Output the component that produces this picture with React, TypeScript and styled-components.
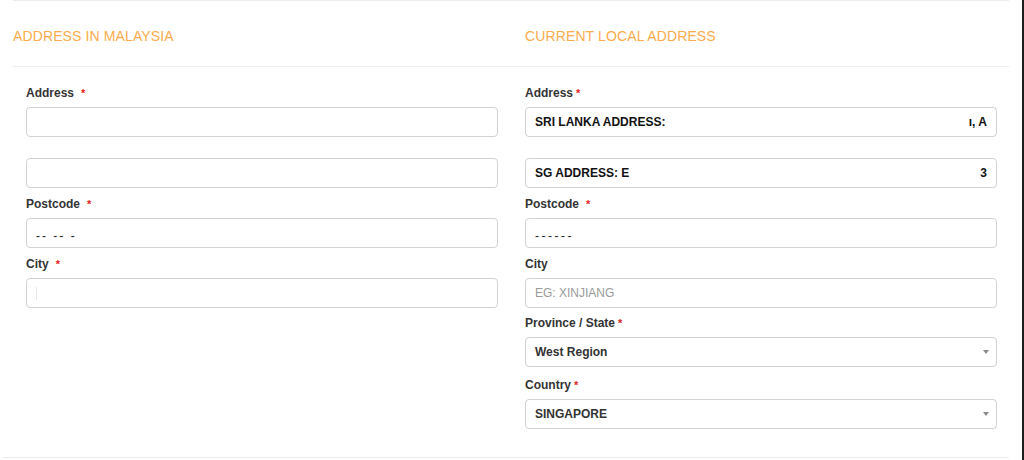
import React from "react";
import styled, { createGlobalStyle } from "styled-components";

const Global = createGlobalStyle`
  html, body { margin: 0; padding: 0; background: #fff; }
  body { font-family: "Liberation Sans", Arial, Helvetica, sans-serif; color: #333; }
`;

const Page = styled.div`
  width: 1024px;
  height: 460px;
  box-sizing: border-box;
  border-right: 2px solid #1e1e1e;
  overflow: hidden;
`;

const Section = styled.div`
  margin-left: 13px;
  width: 996px;
  border-top: 1px solid #ececec;
`;

const HeadRow = styled.div`
  display: grid;
  grid-template-columns: 499px 497px;
  height: 65px;
  border-bottom: 1px solid #ececec;
`;

const Heading = styled.h3<{ $pad: number }>`
  margin: 0;
  padding: 27px 0 0 ${(p) => p.$pad}px;
  font-size: 14px;
  font-weight: 400;
  line-height: 16px;
  color: #fbab4c;
  letter-spacing: 0.12px;
  text-transform: uppercase;
`;

const FormRow = styled.div`
  display: grid;
  grid-template-columns: 499px 497px;
  height: 390px;
`;

const Column = styled.div<{ $left: number }>`
  padding: 18px 0 0 ${(p) => p.$left}px;
  display: flex;
  flex-direction: column;
`;

const Label = styled.div<{ $mt?: number }>`
  width: 472px;
  font-size: 12px;
  font-weight: 700;
  line-height: 16px;
  color: #333;
  margin-top: ${(p) => p.$mt ?? 0}px;
  margin-bottom: 6px;
  white-space: pre;
`;

const Star = styled.span<{ $gap: number }>`
  color: #e3231b;
  margin-left: ${(p) => p.$gap}px;
  font-size: 11px;
`;

const Box = styled.div<{ $mt?: number }>`
  box-sizing: border-box;
  width: 472px;
  height: 30px;
  margin-top: ${(p) => p.$mt ?? 0}px;
  border: 1px solid #d2d2d2;
  border-radius: 4px;
  background: #fff;
  display: flex;
  align-items: center;
  justify-content: space-between;
  padding: 0 9px 0 9px;
  font-size: 12px;
`;

const Value = styled.span<{ $weight?: number; $color?: string; $drop?: number; $spacing?: number }>`
  font-weight: ${(p) => p.$weight ?? 700};
  color: ${(p) => p.$color ?? "#111"};
  padding-top: ${(p) => p.$drop ?? 0}px;
  letter-spacing: ${(p) => p.$spacing ?? 0}px;
  white-space: pre;
`;

const Caret = styled.span`
  width: 1px;
  height: 13px;
  background: #e6e6e6;
`;

const Arrow = styled.span`
  width: 0;
  height: 0;
  border-left: 3.5px solid transparent;
  border-right: 3.5px solid transparent;
  border-top: 4px solid #8a8a8a;
  margin-right: -2px;
`;

const BottomLine = styled.div`
  margin-left: 3px;
  width: 1006px;
  border-top: 1px solid #ececec;
`;

function Req({ text, gap }: { text: string; gap: number }) {
  return (
    <>
      {text}
      <Star $gap={gap}>*</Star>
    </>
  );
}

export default function App() {
  return (
    <Page>
      <Global />
      <Section>
        <HeadRow>
          <Heading $pad={0}>Address in Malaysia</Heading>
          <Heading $pad={13}>Current Local Address</Heading>
        </HeadRow>
        <FormRow>
          <Column $left={13}>
            <Label>
              <Req text="Address" gap={7} />
            </Label>
            <Box />
            <Box $mt={21} />
            <Label $mt={8}>
              <Req text="Postcode" gap={7} />
            </Label>
            <Box>
              <Value $drop={6} $weight={400} $color="#222" $spacing={2}>
                {"-- -- -"}
              </Value>
            </Box>
            <Label $mt={8}>
              <Req text="City" gap={7} />
            </Label>
            <Box>
              <Caret />
            </Box>
          </Column>
          <Column $left={13}>
            <Label>
              <Req text="Address" gap={3} />
            </Label>
            <Box>
              <Value>SRI LANKA ADDRESS:</Value>
              <Value>{"\u0131, A"}</Value>
            </Box>
            <Box $mt={21}>
              <Value>SG ADDRESS: E</Value>
              <Value>3</Value>
            </Box>
            <Label $mt={8}>
              <Req text="Postcode" gap={7} />
            </Label>
            <Box>
              <Value $drop={6} $weight={400} $color="#222" $spacing={2.5}>
                {"------"}
              </Value>
            </Box>
            <Label $mt={8}>City</Label>
            <Box>
              <Value $weight={400} $color="#9a9a9a">
                EG: XINJIANG
              </Value>
            </Box>
            <Label $mt={7}>
              <Req text="Province / State" gap={3} />
            </Label>
            <Box>
              <Value $color="#333">West Region</Value>
              <Arrow />
            </Box>
            <Label $mt={10}>
              <Req text="Country" gap={3} />
            </Label>
            <Box>
              <Value $color="#333">SINGAPORE</Value>
              <Arrow />
            </Box>
          </Column>
        </FormRow>
      </Section>
      <BottomLine />
    </Page>
  );
}
